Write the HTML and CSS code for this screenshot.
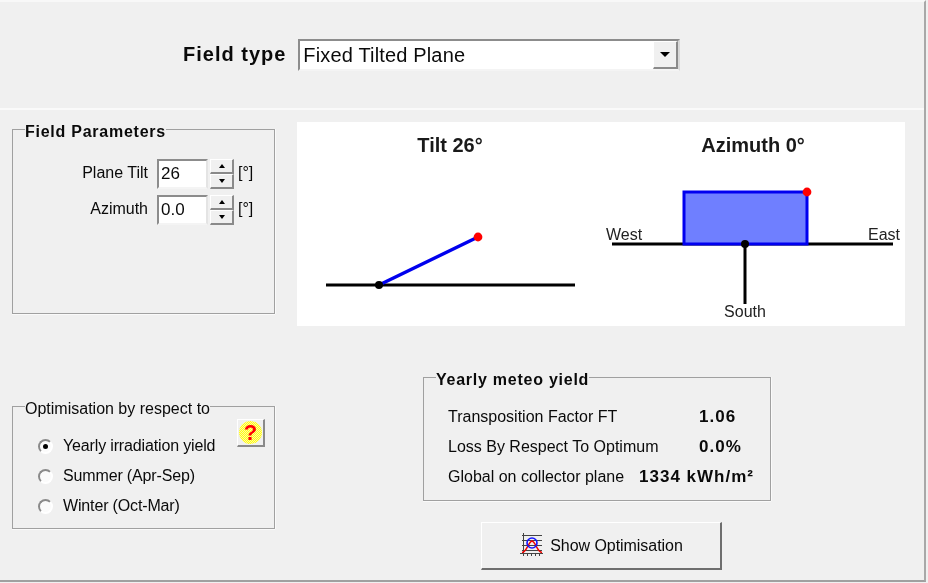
FILE: index.html
```html
<!DOCTYPE html>
<html lang="en">
<head>
<meta charset="utf-8">
<title>Field type</title>
<link rel="stylesheet" href="styles.css">
</head>
<body>
<div class="app">
  <header class="top">
    <label class="field-label">Field type</label>
    <div class="combo">
      <span class="combo-text">Fixed Tilted Plane</span>
      <span class="combo-btn"><span class="arrow-down"></span></span>
    </div>
  </header>
  <main class="bottom">
    <div class="left">
      <fieldset class="group params">
        <legend class="bold-legend">Field Parameters</legend>
        <div class="param-row">
          <span class="param-label">Plane Tilt</span>
          <span class="num-input">26</span>
          <span class="spin"><span class="spin-btn"><i class="tri-up"></i></span><span class="spin-btn"><i class="tri-down"></i></span></span>
          <span class="unit">[°]</span>
        </div>
        <div class="param-row">
          <span class="param-label">Azimuth</span>
          <span class="num-input">0.0</span>
          <span class="spin"><span class="spin-btn"><i class="tri-up"></i></span><span class="spin-btn"><i class="tri-down"></i></span></span>
          <span class="unit">[°]</span>
        </div>
      </fieldset>
      <fieldset class="group optim">
        <legend class="plain-legend">Optimisation by respect to</legend>
        <div class="optim-body">
          <div class="radios">
            <div class="radio-row"><span class="radio checked"></span>Yearly irradiation yield</div>
            <div class="radio-row"><span class="radio"></span>Summer (Apr-Sep)</div>
            <div class="radio-row"><span class="radio"></span>Winter (Oct-Mar)</div>
          </div>
          <div class="help-btn"><span class="help-disc">?</span></div>
        </div>
      </fieldset>
    </div>
    <div class="right">
      <svg class="preview" width="608" height="204" viewBox="0 0 608 204">
        <text x="153" y="30" class="diag-title" text-anchor="middle">Tilt 26°</text>
        <line x1="29" y1="163" x2="278" y2="163" class="ground"/>
        <line x1="82" y1="163" x2="181" y2="115" class="plane"/>
        <circle cx="82" cy="163" r="4" fill="#000"/>
        <circle cx="181" cy="115" r="4.4" fill="#f00"/>

        <text x="456" y="30" class="diag-title" text-anchor="middle">Azimuth 0°</text>
        <text x="309" y="118" class="diag-small">West</text>
        <text x="571" y="118" class="diag-small">East</text>
        <text x="448" y="195" class="diag-small" text-anchor="middle">South</text>
        <line x1="315" y1="122" x2="596" y2="122" class="ground"/>
        <line x1="448" y1="122" x2="448" y2="182" class="ground"/>
        <rect x="387" y="70" width="123" height="52" class="panel"/>
        <circle cx="448" cy="122" r="4" fill="#000"/>
        <circle cx="510" cy="70" r="4.4" fill="#f00"/>
      </svg>
      <fieldset class="group yield">
        <legend class="bold-legend">Yearly meteo yield</legend>
        <div class="yield-row"><span>Transposition Factor FT</span><b class="val short">1.06</b></div>
        <div class="yield-row"><span>Loss By Respect To Optimum</span><b class="val short">0.0%</b></div>
        <div class="yield-row"><span>Global on collector plane</span><b class="val">1334 kWh/m²</b></div>
      </fieldset>
      <div class="show-btn">
        <svg width="24" height="25" viewBox="0 0 24 25">
          <g stroke="#444" stroke-width="1" fill="none">
            <path d="M3 2.5H23M3 7.5H23M3 12.5H23M3 17.5H23"/>
            <path d="M4.5 0V23M1 20.5H24"/>
            <path d="M8.5 20V23M12.5 20V23M16.5 20V23M20.5 20V23"/>
          </g>
          <path d="M3 19.5C8 19 9 9 13 8C17 9 18 19 23 19.5" stroke="#f00500" stroke-width="1.4" fill="none"/>
          <circle cx="13" cy="10" r="5" stroke="#1414ff" stroke-width="1.6" fill="none"/>
        </svg>
        <span>Show Optimisation</span>
      </div>
    </div>
  </main>
</div>
</body>
</html>
```
FILE: styles.css
```css
html, body {
  margin: 0;
  padding: 0;
  background: #f0f0f0;
}
.app {
  width: 926px;
  height: 582px;
  box-sizing: border-box;
  border-top: 2px solid #f8f8f8;
  border-right: 2px solid #a8a8a8;
  border-bottom: 2px solid #a0a0a0;
  background: #f0f0f0;
  color: #0a0a0a;
  font-family: "Liberation Sans", Arial, sans-serif;
  font-size: 16px;
  filter: blur(0.45px);
  overflow: hidden;
}
.top {
  height: 108px;
  box-sizing: border-box;
  border-bottom: 2px solid #fafafa;
  padding: 37px 0 0 183px;
  display: flex;
  align-items: flex-start;
  gap: 12px;
}
.field-label {
  font-weight: bold;
  font-size: 20px;
  letter-spacing: 1px;
  line-height: 30px;
}
.combo {
  width: 382px;
  height: 32px;
  box-sizing: border-box;
  border: 2px solid #8c8c8c;
  border-right-color: #d8d8d8;
  border-bottom-color: #f4f4f4;
  background: #fff;
  display: flex;
  align-items: center;
  justify-content: space-between;
}
.combo-text {
  font-size: 20px;
  letter-spacing: 0.16px;
  padding-left: 3px;
}
.combo-btn {
  width: 25px;
  height: 28px;
  box-sizing: border-box;
  background: #f0f0f0;
  border: 1px solid #fff;
  border-right: 2px solid #8a8a8a;
  border-bottom: 2px solid #8a8a8a;
  display: flex;
  align-items: center;
  justify-content: center;
}
.arrow-down {
  width: 0;
  height: 0;
  border-left: 5px solid transparent;
  border-right: 5px solid transparent;
  border-top: 5px solid #000;
}
.bottom {
  display: flex;
  padding-left: 12px;
  gap: 22px;
}
.left {
  width: 263px;
  flex: none;
}
.right {
  width: 608px;
  flex: none;
  padding-top: 12px;
}
.group {
  margin: 0;
  padding: 0;
  box-sizing: border-box;
  border: 1px solid #a0a0a0;
  box-shadow: 0 1px 0 #fafafa, 1px 0 0 #fafafa;
  min-width: 0;
}
.bold-legend {
  font-weight: bold;
  font-size: 16px;
  letter-spacing: 0.75px;
  line-height: 18px;
  padding: 6px 0 0;
  margin-left: 12px;
}
.plain-legend {
  font-size: 16px;
  line-height: 18px;
  padding: 6px 0 0;
  margin-left: 12px;
}
.params {
  width: 263px;
  height: 197px;
  margin-top: 7px;
  padding-top: 18px;
}
.param-row {
  display: flex;
  align-items: center;
  height: 30px;
  margin-bottom: 6px;
}
.param-label {
  width: 135px;
  text-align: right;
  margin: -3px 9px 0 0;
}
.num-input {
  width: 51px;
  height: 30px;
  box-sizing: border-box;
  background: #fff;
  border: 2px solid #8c8c8c;
  border-right-color: #e4e4e4;
  border-bottom-color: #f4f4f4;
  font-size: 17px;
  line-height: 26px;
  padding-left: 2px;
}
.spin {
  width: 24px;
  height: 30px;
  margin-left: 2px;
  display: flex;
  flex-direction: column;
}
.spin-btn {
  flex: 1;
  box-sizing: border-box;
  border-right: 2px solid #8a8a8a;
  border-bottom: 2px solid #8a8a8a;
  border-top: 1px solid #fff;
  border-left: 1px solid #fff;
  display: flex;
  align-items: center;
  justify-content: center;
}
.tri-up, .tri-down {
  width: 0;
  height: 0;
  border-left: 3.5px solid transparent;
  border-right: 3.5px solid transparent;
}
.tri-up { border-bottom: 4px solid #000; }
.tri-down { border-top: 4px solid #000; }
.unit {
  margin: -3px 0 0 4px;
  font-size: 16px;
}
.optim {
  width: 263px;
  height: 135px;
  margin-top: 80px;
}
.optim-body {
  display: flex;
  justify-content: space-between;
  align-items: flex-start;
  padding: 13px 9px 0 25px;
}
.radio-row {
  display: flex;
  align-items: center;
  height: 30px;
  letter-spacing: -0.15px;
}
.radio {
  width: 15px;
  height: 15px;
  box-sizing: border-box;
  border-radius: 50%;
  background: #fbfbfb;
  border: 2px solid #8a8a8a;
  border-right-color: #fff;
  border-bottom-color: #fff;
  margin-right: 10px;
  display: flex;
  align-items: center;
  justify-content: center;
}
.radio.checked::after {
  content: "";
  width: 5px;
  height: 5px;
  border-radius: 50%;
  background: #000;
}
.help-btn {
  width: 28px;
  height: 28px;
  box-sizing: border-box;
  margin-top: -12px;
  border-top: 1px solid #fff;
  border-left: 1px solid #fff;
  border-right: 2px solid #8a8a8a;
  border-bottom: 2px solid #8a8a8a;
  display: flex;
  align-items: center;
  justify-content: center;
}
.help-disc {
  width: 23px;
  height: 23px;
  border-radius: 50%;
  background: repeating-conic-gradient(#ffff10 0 25%, #fff8a0 0 50%) 0 0 / 2px 2px;
  color: #f00;
  font-weight: bold;
  font-size: 22px;
  line-height: 23px;
  text-align: center;
}
.preview {
  display: block;
  background: #fff;
}
.ground {
  stroke: #000;
  stroke-width: 3;
}
.plane {
  stroke: #0000ee;
  stroke-width: 3.4;
}
.panel {
  fill: #6f7fff;
  stroke: #0000f0;
  stroke-width: 3;
}
.diag-title {
  font-family: "Liberation Sans", Arial, sans-serif;
  font-weight: bold;
  font-size: 20px;
  fill: #1a1a1a;
}
.diag-small {
  font-family: "Liberation Sans", Arial, sans-serif;
  font-size: 16px;
  fill: #222;
}
.yield {
  width: 348px;
  height: 136px;
  margin: 39px 0 0 126px;
  padding: 13px 16px 0 0;
}
.yield-row {
  display: flex;
  justify-content: space-between;
  align-items: center;
  height: 30px;
  margin-left: 24px;
  white-space: nowrap;
}
.val {
  font-size: 17px;
  letter-spacing: 1px;
  flex: none;
}
.val.short {
  width: 55px;
}
.show-btn {
  width: 241px;
  height: 48px;
  box-sizing: border-box;
  margin: 21px 0 0 184px;
  border-top: 1px solid #fff;
  border-left: 1px solid #fff;
  border-right: 2px solid #6e6e6e;
  border-bottom: 2px solid #6e6e6e;
  display: flex;
  align-items: center;
  justify-content: center;
  gap: 7px;
  letter-spacing: -0.05px;
}
```
